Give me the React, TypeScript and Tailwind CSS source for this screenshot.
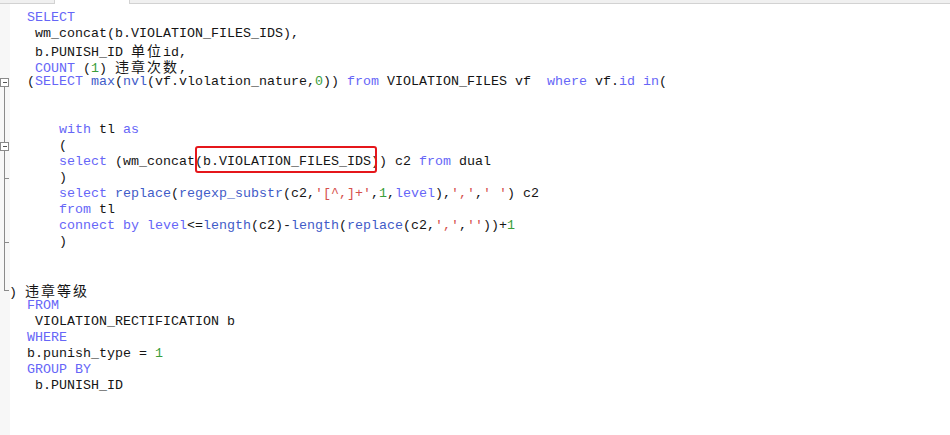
import React from 'react';

type Seg = [string, string?];

const K = 'text-[#6666f7]'; // keywords
const F = 'text-[#3f5cc8]'; // functions
const N = 'text-[#3a9e3a]'; // numbers
const S = 'text-[#d6504c]'; // strings
const C = "font-['Noto_Sans_CJK_SC',sans-serif] text-[14px] leading-[16px] tracking-[2px]";

const lines: Seg[][] = [
  [['SELECT', K]],
  [[' wm_concat(b.VIOLATION_FILES_IDS),']],
  [[' b.PUNISH_ID '], ['单位', C], ['id,']],
  [[' '], ['COUNT', K], [' ('], ['1', N], [') '], ['违章次数', C], [',']],
  [
    ['('], ['SELECT', K], [' '], ['max', F], ['('], ['nvl', F], ['(vf.vlolation_nature,'], ['0', N], ['))'],
    [' '], ['from', K], [' VIOLATION_FILES vf  '], ['where', K], [' vf.'], ['id', K], [' '], ['in', K], ['('],
  ],
  [],
  [],
  [['    '], ['with', K], [' tl '], ['as', K]],
  [['    (']],
  [['    '], ['select', K], [' (wm_concat(b.VIOLATION_FILES_IDS)) c2 '], ['from', K], [' dual']],
  [['    )']],
  [
    ['    '], ['select', K], [' '], ['replace', F], ['('], ['regexp_substr', F], ['(c2,'], ["'[^,]+'", S], [','],
    ['1', N], [','], ['level', K], ['),'], ["','", S], [','], ["' '", S], [') c2'],
  ],
  [['    '], ['from', K], [' tl']],
  [
    ['    '], ['connect by', K], [' '], ['level', K], ['<='], ['length', F], ['(c2)-'], ['length', F], ['('],
    ['replace', F], ['(c2,'], ["','", S], [','], ["''", S], ['))+'], ['1', N],
  ],
  [['    )']],
  [],
  [],
  [[') '], ['违章等级', C]],
  [['FROM', K]],
  [[' VIOLATION_RECTIFICATION b']],
  [['WHERE', K]],
  [['b.punish_type = '], ['1', N]],
  [['GROUP BY', K]],
  [[' b.PUNISH_ID']],
];

const FoldGutter: React.FC = () => (
  <svg width="10" height="431" className="block" shapeRendering="crispEdges">
    {/* page y minus 4 for the tab strip */}
    <line x1="4.5" y1="82" x2="4.5" y2="138" stroke="#8a8a8a" />
    <line x1="4.5" y1="146" x2="4.5" y2="286.5" stroke="#8a8a8a" />
    <line x1="4.5" y1="174.5" x2="9" y2="174.5" stroke="#8a8a8a" />
    <line x1="4.5" y1="238.5" x2="9" y2="238.5" stroke="#8a8a8a" />
    <line x1="4.5" y1="286.5" x2="9" y2="286.5" stroke="#8a8a8a" />
    <rect x="0.5" y="74.5" width="8" height="8" fill="#fff" stroke="#8a8a8a" />
    <line x1="2.5" y1="78.5" x2="7" y2="78.5" stroke="#555" />
    <rect x="0.5" y="138.5" width="8" height="8" fill="#fff" stroke="#8a8a8a" />
    <line x1="2.5" y1="142.5" x2="7" y2="142.5" stroke="#555" />
  </svg>
);

const App: React.FC = () => {
  return (
    <div className="relative w-[950px] h-[435px] overflow-hidden bg-white">
      {/* tab strip */}
      <div className="flex h-[4px]">
        <div className="w-[55px] bg-[#f0f0f0] border-b border-r border-[#d2d2d2]" />
        <div className="w-[74px] bg-white" />
        <div className="flex-1 bg-[#f0f0f0] border-b border-l border-[#d2d2d2]" />
      </div>

      <div className="flex">
        <div className="w-[10px] bg-[#f7f7f7]">
          <FoldGutter />
        </div>
        <div className="pl-[17px] pt-[6px] font-['Liberation_Mono','Noto_Sans_CJK_SC',monospace] text-[13.33px] text-[#151515]">
          {lines.map((segs, i) => (
            <div key={i} className={`h-[16px] leading-[16px] whitespace-pre ${i === 17 ? 'ml-[-18px]' : ''}`}>
              {segs.map(([t, cls], j) => (
                <span key={j} className={cls}>
                  {t}
                </span>
              ))}
            </div>
          ))}
        </div>
      </div>

      {/* red highlight box */}
      <div className="absolute left-[195px] top-[146px] w-[182px] h-[27px] border-2 border-[#e5161b] rounded-[3px]" />
    </div>
  );
};

export default App;
